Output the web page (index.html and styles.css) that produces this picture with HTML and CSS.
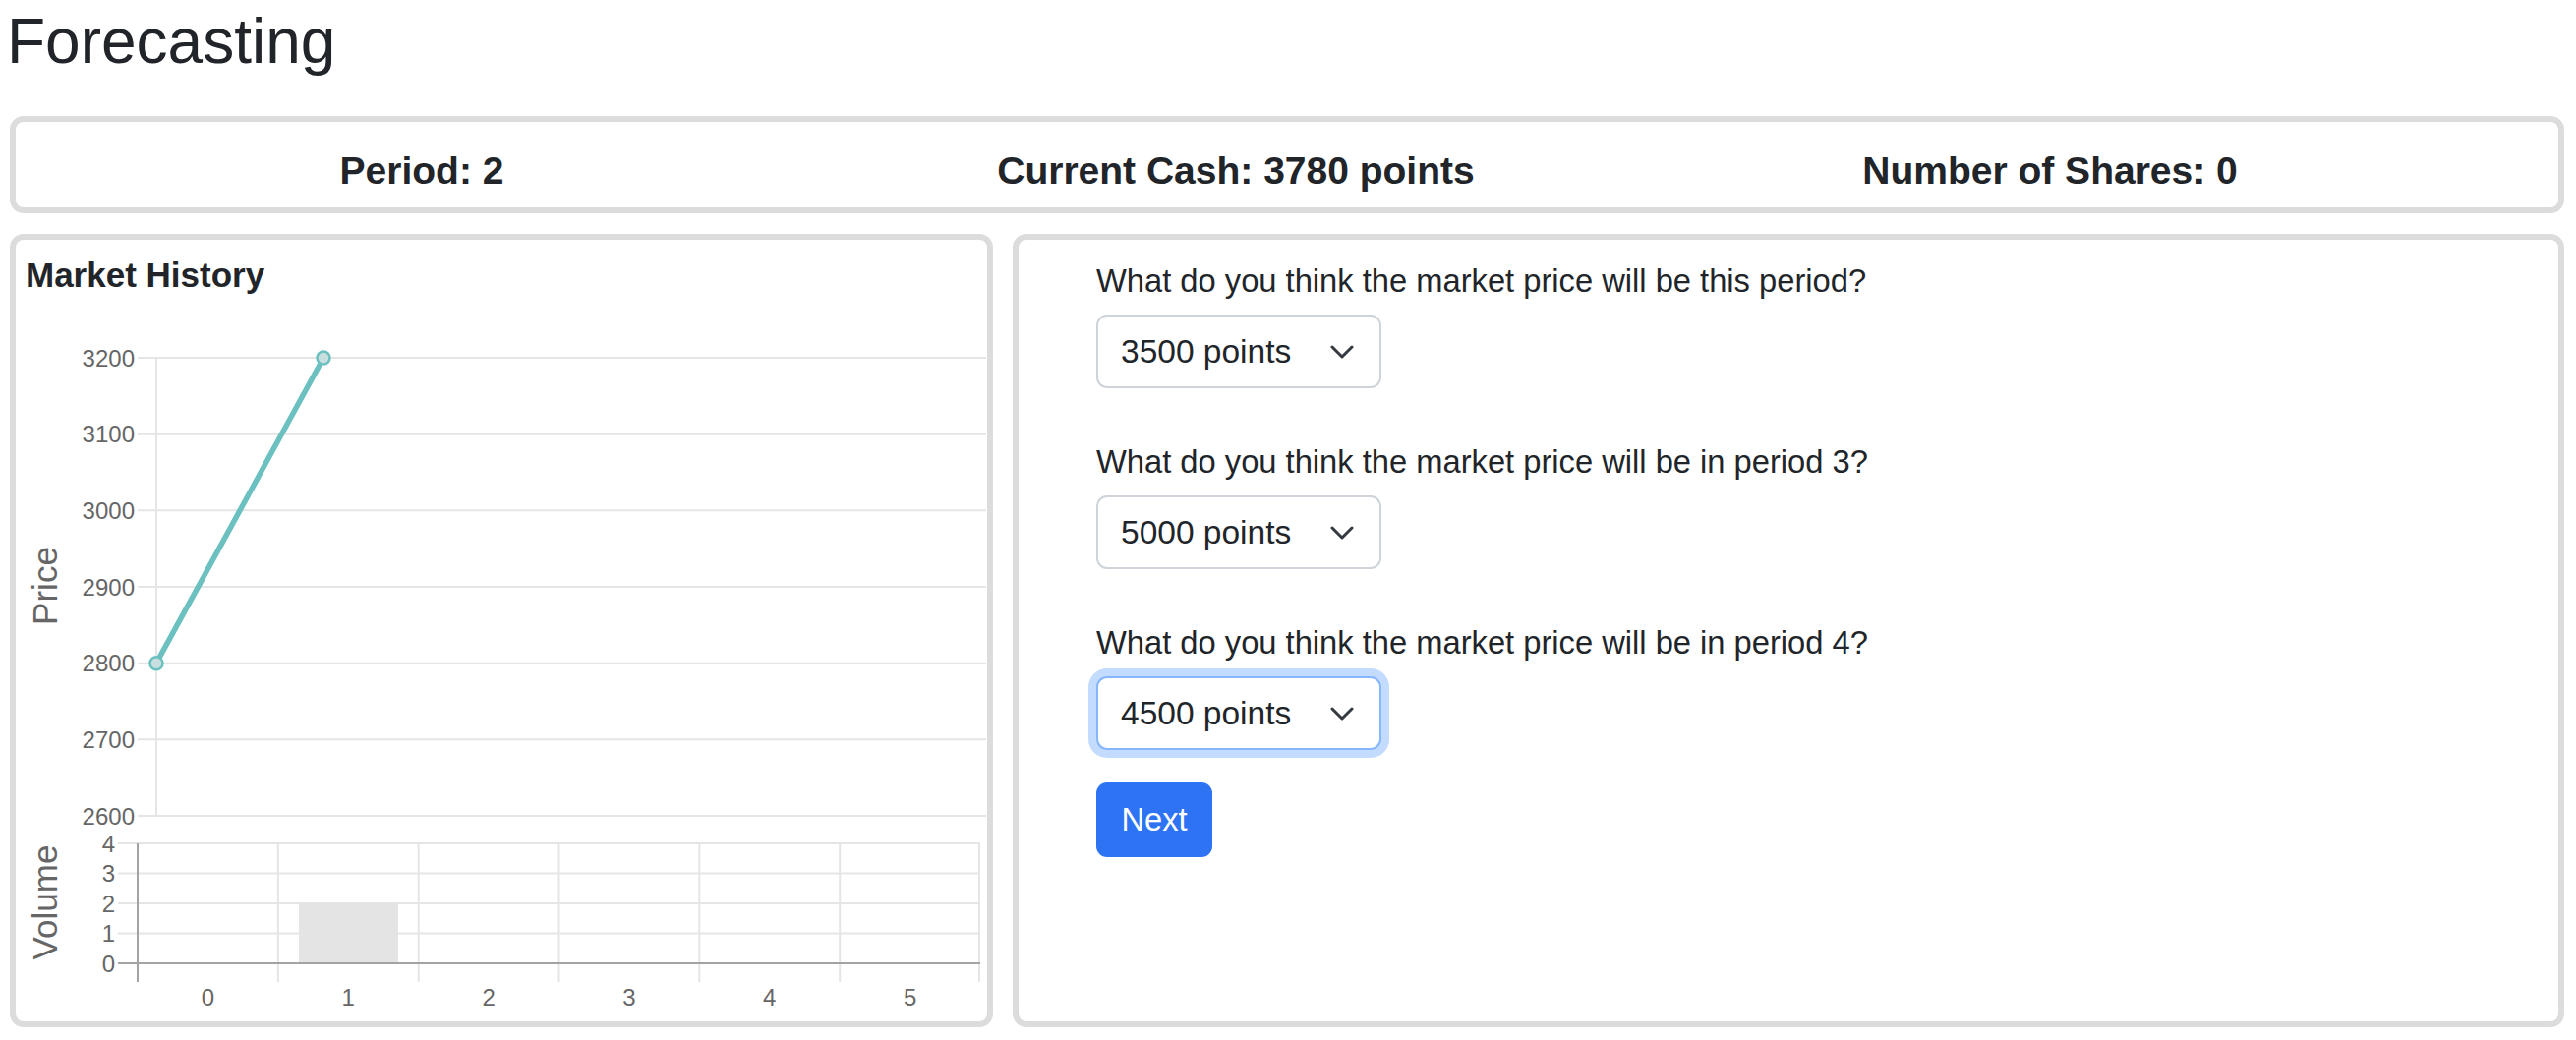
FILE: index.html
```html
<!DOCTYPE html>
<html lang="en">
<head>
<meta charset="utf-8">
<title>Forecasting</title>
<link rel="stylesheet" href="styles.css">
</head>
<body>
<div class="page">
  <h2 class="title">Forecasting</h2>

  <div class="card stats">
    <div class="stats-row">
      <h5 class="stat">Period: 2</h5>
      <h5 class="stat">Current Cash: 3780 points</h5>
      <h5 class="stat">Number of Shares: 0</h5>
    </div>
  </div>

  <div class="main">
    <div class="card history">
      <h5 class="history-title">Market History</h5>
      <svg class="chart" width="987" height="729" viewBox="0 0 987 729" xmlns="http://www.w3.org/2000/svg">
        <!-- price chart grid -->
        <g stroke="#e5e5e5" stroke-width="2">
          <line x1="124" y1="54" x2="987" y2="54"/>
          <line x1="124" y1="131.67" x2="987" y2="131.67"/>
          <line x1="124" y1="209.33" x2="987" y2="209.33"/>
          <line x1="124" y1="287" x2="987" y2="287"/>
          <line x1="124" y1="364.67" x2="987" y2="364.67"/>
          <line x1="124" y1="442.33" x2="987" y2="442.33"/>
          <line x1="124" y1="520" x2="987" y2="520"/>
          <line x1="143" y1="54" x2="143" y2="520"/>
        </g>
        <g class="tick" text-anchor="end">
          <text x="121" y="62.5">3200</text>
          <text x="121" y="140.2">3100</text>
          <text x="121" y="217.8">3000</text>
          <text x="121" y="295.5">2900</text>
          <text x="121" y="373.2">2800</text>
          <text x="121" y="450.8">2700</text>
          <text x="121" y="528.5">2600</text>
        </g>
        <text class="axis-title" text-anchor="middle" transform="translate(42 286) rotate(-90)">Price</text>
        <line x1="143" y1="364.67" x2="313" y2="54" stroke="#6cc0c0" stroke-width="5.5" stroke-linecap="round"/>
        <circle cx="143" cy="364.67" r="6.5" fill="#c9dede" stroke="#6cc0c0" stroke-width="2.5"/>
        <circle cx="313" cy="54" r="6.5" fill="#c9dede" stroke="#6cc0c0" stroke-width="2.5"/>

        <!-- volume chart grid -->
        <g stroke="#e5e5e5" stroke-width="2">
          <line x1="104" y1="548" x2="981" y2="548"/>
          <line x1="104" y1="578.5" x2="981" y2="578.5"/>
          <line x1="104" y1="609" x2="981" y2="609"/>
          <line x1="104" y1="639.5" x2="981" y2="639.5"/>
          <line x1="266.8" y1="548" x2="266.8" y2="689"/>
          <line x1="409.7" y1="548" x2="409.7" y2="689"/>
          <line x1="552.5" y1="548" x2="552.5" y2="689"/>
          <line x1="695.3" y1="548" x2="695.3" y2="689"/>
          <line x1="838.2" y1="548" x2="838.2" y2="689"/>
          <line x1="980" y1="548" x2="980" y2="689"/>
        </g>
        <rect x="288" y="609" width="101" height="61" fill="#e4e4e4"/>
        <line x1="104" y1="670" x2="981" y2="670" stroke="#a3a3a3" stroke-width="2"/>
        <line x1="124" y1="548" x2="124" y2="689" stroke="#a3a3a3" stroke-width="2"/>
        <g class="tick" text-anchor="end">
          <text x="101" y="556.5">4</text>
          <text x="101" y="587">3</text>
          <text x="101" y="617.5">2</text>
          <text x="101" y="648">1</text>
          <text x="101" y="678.5">0</text>
        </g>
        <g class="tick" text-anchor="middle">
          <text x="195.4" y="713">0</text>
          <text x="338.3" y="713">1</text>
          <text x="481.1" y="713">2</text>
          <text x="624" y="713">3</text>
          <text x="766.8" y="713">4</text>
          <text x="909.7" y="713">5</text>
        </g>
        <text class="axis-title" text-anchor="middle" transform="translate(42 608) rotate(-90)">Volume</text>
      </svg>
    </div>

    <div class="card forecast">
      <div class="field">
        <p class="question">What do you think the market price will be this period?</p>
        <div class="select"><span>3500 points</span>
          <svg class="chev" width="24" height="14" viewBox="0 0 24 14"><path d="M2 2 L12 12 L22 2" fill="none" stroke="#343a40" stroke-width="3" stroke-linecap="round" stroke-linejoin="round"/></svg>
        </div>
      </div>
      <div class="field">
        <p class="question">What do you think the market price will be in period 3?</p>
        <div class="select"><span>5000 points</span>
          <svg class="chev" width="24" height="14" viewBox="0 0 24 14"><path d="M2 2 L12 12 L22 2" fill="none" stroke="#343a40" stroke-width="3" stroke-linecap="round" stroke-linejoin="round"/></svg>
        </div>
      </div>
      <div class="field field-last">
        <p class="question">What do you think the market price will be in period 4?</p>
        <div class="select focused"><span>4500 points</span>
          <svg class="chev" width="24" height="14" viewBox="0 0 24 14"><path d="M2 2 L12 12 L22 2" fill="none" stroke="#343a40" stroke-width="3" stroke-linecap="round" stroke-linejoin="round"/></svg>
        </div>
      </div>
      <button class="btn" type="button">Next</button>
    </div>
  </div>
</div>
</body>
</html>
```

FILE: styles.css
```css
html, body {
  margin: 0;
  background: #fff;
}

body {
  font-family: "Liberation Sans", Arial, Helvetica, sans-serif;
  color: #212529;
}

.page {
  padding: 0 12px 0 10px;
}

.title {
  font-size: 64px;
  font-weight: 400;
  line-height: 77px;
  margin: 4px 0 37px -3px;
}

.card {
  border: 6px solid #dcdcdc;
  border-radius: 14px;
  background: #fff;
}

.stats {
  padding: 26px 0 14px;
}

.stats-row {
  display: grid;
  grid-template-columns: repeat(3, 828px);
  margin-left: -1px;
}

.stat {
  margin: 0;
  font-size: 39px;
  font-weight: 700;
  line-height: 47px;
  text-align: center;
}

.main {
  display: grid;
  grid-template-columns: 1000px 1fr;
  gap: 20px;
  margin-top: 21px;
}

.history {
  padding: 15px 0 0 0;
}

.history-title {
  margin: 0 0 9px 10px;
  font-size: 35px;
  font-weight: 700;
  line-height: 42px;
}

.chart {
  display: block;
  width: 987px;
  height: 729px;
}

.tick {
  font-family: "Liberation Sans", Arial, sans-serif;
  font-size: 24px;
  fill: #666;
}

.axis-title {
  font-family: "Liberation Sans", Arial, sans-serif;
  font-size: 35px;
  fill: #666;
}

.forecast {
  padding: 17px 0 0 79px;
}

.field {
  margin-bottom: 50px;
}

.field-last {
  margin-bottom: 33px;
}

.question {
  margin: 0 0 10px;
  font-size: 32.7px;
  line-height: 49px;
}

.select {
  box-sizing: border-box;
  width: 290px;
  height: 75px;
  display: flex;
  align-items: center;
  justify-content: space-between;
  padding: 0 26px 0 23px;
  border: 2px solid #ced4da;
  border-radius: 11px;
  font-size: 33.5px;
  background: #fff;
}

.select.focused {
  border-color: #86b7fe;
  box-shadow: 0 0 0 8px rgba(13, 110, 253, 0.25);
}

.chev {
  display: block;
}

.btn {
  display: block;
  box-sizing: border-box;
  width: 118px;
  height: 76px;
  padding: 0 24px;
  border: none;
  border-radius: 11px;
  background: #2f73f5;
  color: #fff;
  font-family: "Liberation Sans", Arial, sans-serif;
  font-size: 32.7px;
  cursor: pointer;
}
```
